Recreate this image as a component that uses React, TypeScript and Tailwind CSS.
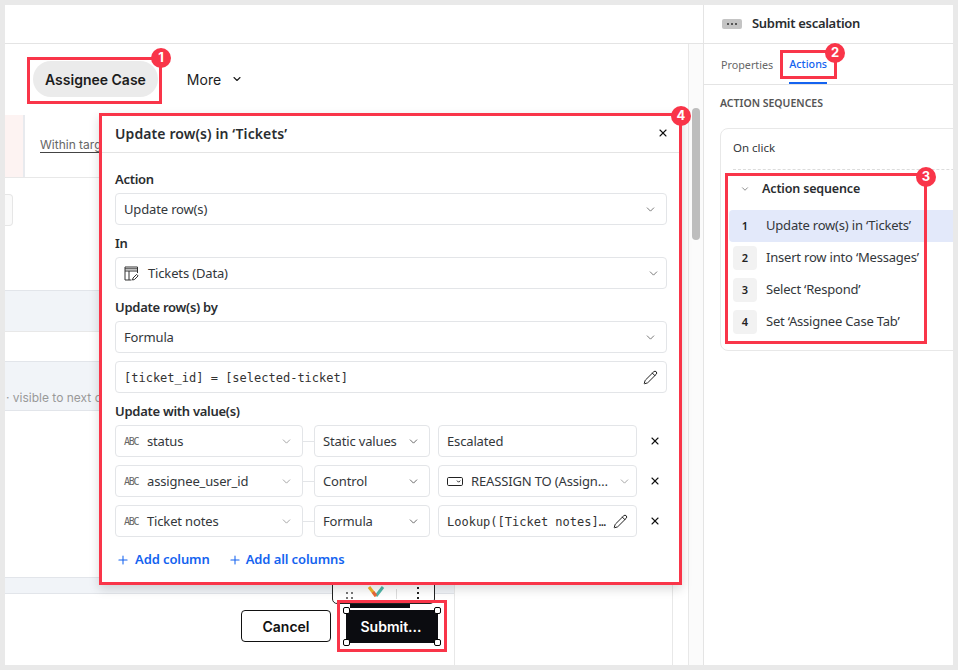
import React from "react";
import { ChevronDown, Plus, X, Pencil } from "lucide-react";

const plex = "[font-family:'Noto_Sans',sans-serif]";
const inter = "[font-family:Inter,sans-serif]";
const mono = "[font-family:'DejaVu_Sans_Mono',monospace]";

function Chev({ className = "text-[#666]" }: { className?: string }) {
  return <ChevronDown size={13} strokeWidth={1.6} className={"shrink-0 " + className} />;
}

function Label({ children }: { children: React.ReactNode }) {
  return <div className="h-[18px] mb-[5px] text-[13px] tracking-[-0.28px] leading-[18px] font-semibold text-[#2a2d30]">{children}</div>;
}

function Field({ children, className = "" }: { children: React.ReactNode; className?: string }) {
  return (
    <div className={"h-8 shrink-0 flex items-center justify-between rounded-[4px] border border-[#e3e5e8] bg-white pl-2 pr-[9px] pt-px text-[13px] tracking-[-0.15px] text-[#33373b] " + className}>
      {children}
    </div>
  );
}

function Abc() {
  return <span className={mono + " text-[10px] tracking-[-1.25px] text-[#666] w-[23px] shrink-0"}>ABC</span>;
}

function TableIcon() {
  return (
    <svg width="15" height="15" viewBox="0 0 15 15" fill="none" stroke="#333" strokeWidth="1" className="shrink-0">
      <path d="M13.5 7V1H1v13h6.5" />
      <path d="M1 2.8h12.5M1 5h12.5M5 5v9" />
      <path d="M8.5 14l.5-2 3.6-3.6 1.5 1.5-3.6 3.6z" />
    </svg>
  );
}

function ControlIcon() {
  return (
    <svg width="16" height="10" viewBox="0 0 16 10" fill="none" stroke="#222" strokeWidth="1" className="shrink-0">
      <rect x="0.5" y="0.5" width="15" height="8" rx="1.2" />
      <path d="M10 3.6l1.6 1.6 1.6-1.6" />
    </svg>
  );
}

function ValueRow({ name, op, value }: { name: string; op: string; value: React.ReactNode }) {
  return (
    <div className="flex items-center h-8">
      <Field className="w-[188px]">
        <div className="flex items-center">
          <Abc />
          <span>{name}</span>
        </div>
        <Chev className="text-[#999]" />
      </Field>
      <div className="w-[11px] h-px shrink-0 bg-[#e3e5e8]" />
      <Field className="w-[116px]">
        <span>{op}</span>
        <Chev className="text-[#555]" />
      </Field>
      <div className="w-2 shrink-0" />
      {value}
      <div className="w-[30px] shrink-0 flex pl-[12px]">
        <X size={12} strokeWidth={2.2} className="text-[#111]" />
      </div>
    </div>
  );
}

function RedBox({ className }: { className: string }) {
  return <div className={"absolute border-[3px] border-[#f93549] z-30 " + className} />;
}

function Badge({ n, className }: { n: number; className: string }) {
  return (
    <div className={inter + " absolute z-40 w-5 h-5 rounded-full bg-[#f93549] text-white text-[13px] font-bold flex items-center justify-center " + className}>
      {n}
    </div>
  );
}

function Handle({ className }: { className: string }) {
  return <div className={"absolute w-[7px] h-[7px] rounded-[2px] bg-white border border-black " + className} />;
}

function SeqItem({ n, text, active }: { n: number; text: string; active?: boolean }) {
  return (
    <div className={"flex items-center h-8 pl-1 rounded-l-[4px] " + (active ? "bg-[#e3e9fa]" : "")}>
      <div className={"w-6 h-6 rounded-[4px] flex items-center justify-center text-[11px] font-semibold text-[#222] " + (active ? "" : "bg-[#f2f2f2]")}>{n}</div>
      <span className="ml-[9px] text-[13px] tracking-[-0.2px] whitespace-nowrap text-[#33373b]">{text}</span>
    </div>
  );
}

export default function App() {
  return (
    <div className={plex + " relative w-[958px] h-[670px] bg-[#e9e9e9] p-[5px] flex overflow-hidden"}>
      {/* Left */}
      <div className="w-[698px] flex flex-col bg-white">
        <div className="h-[39px] shrink-0 border-b border-[#e4e4e4]" />
        <div className="flex-1 flex min-h-0">
          <div className="w-[683px] flex flex-col">
            <div className={inter + " h-[71px] shrink-0 flex items-center pl-[28px] pb-px text-[14px] text-[#1c1c1c]"}>
              <div className="h-9 px-3 flex items-center rounded-full bg-[#ebebeb] font-semibold">Assignee Case</div>
              <div className="ml-[29px] flex items-center gap-[10px]">
                <span>More</span>
                <ChevronDown size={12} strokeWidth={2.2} />
              </div>
            </div>
            <div className="flex-1 flex min-h-0">
              <div className="w-[449px] flex flex-col">
                <div className="h-[63px] shrink-0 flex border-b border-[#e8e8e8]">
                  <div className="w-[20px] bg-[#fdf3f2] border-r-2 border-[#e8eaee]" />
                  <div className={inter + " ml-[15px] pt-[21px] text-[12px] text-[#666]"}>
                    <span className="border-b border-[#444] whitespace-nowrap">Within target</span>
                  </div>
                </div>
                <div className="h-[112px] shrink-0 pt-4">
                  <div className="w-2 h-8 bg-[#fafafa] border border-l-0 border-[#e6e6e6] rounded-r-[4px]" />
                </div>
                <div className="h-[41px] shrink-0 bg-[#f1f4f8] border-t border-[#e2e5ea]" />
                <div className="h-[30px] shrink-0 border-t border-[#e8e8e8]" />
                <div className={inter + " h-[50px] shrink-0 bg-[#f1f4f8] border-t border-b border-[#e2e5ea] pt-[27px] pl-px text-[12px] leading-[18px] text-[#999] whitespace-nowrap overflow-hidden"}>
                  · visible to next case
                </div>
                <div className="flex-1" />
                <div className="h-[17px] shrink-0 bg-[#f1f4f8] border-t border-b border-[#e2e5ea]" />
                <div className={inter + " h-[71px] shrink-0 flex justify-end items-start pr-[16px] pt-[16px] gap-[15px] text-[14px] font-semibold"}>
                  <div className="w-[90px] h-8 flex items-center justify-center border border-[#111] rounded-[4px] text-[#111]">Cancel</div>
                  <div className="relative w-[92px] h-[33px] flex items-center justify-center pr-[2px] bg-[#0b0c10] text-white">
                    Submit...
                    <Handle className="-left-[3px] -top-[3px]" />
                    <Handle className="-right-[3px] -top-[3px]" />
                    <Handle className="-left-[3px] -bottom-[3px]" />
                    <Handle className="-right-[3px] -bottom-[3px]" />
                  </div>
                </div>
              </div>
              <div className="flex-1 border-l border-[#e8e8e8]" />
              <div className="w-4 border-l border-[#e8e8e8]" />
            </div>
          </div>
          <div className="w-[15px] border-l border-[#e8e8e8] bg-[#fbfbfb] pt-[64px] pl-[3px]">
            <div className="w-2 h-[132px] rounded-[4px] bg-[#bdbdbd]" />
          </div>
        </div>
      </div>

      {/* Right panel */}
      <div className="w-[250px] bg-white border-l border-[#e4e4e4] flex flex-col overflow-hidden">
        <div className="h-[39px] shrink-0 border-b border-[#e4e4e4] flex items-center pl-[18px]">
          <div className="w-5 h-[10px] rounded-[2px] bg-[#c4c4c4] flex items-center justify-center gap-[2px]">
            <span className="w-[2px] h-[2px] bg-[#555]" />
            <span className="w-[2px] h-[2px] bg-[#555]" />
            <span className="w-[2px] h-[2px] bg-[#555]" />
          </div>
          <span className="ml-[10px] text-[13px] tracking-[-0.3px] font-semibold text-[#2a2d30]">Submit escalation</span>
        </div>
        <div className="h-[41px] shrink-0 border-b border-[#e4e4e4] flex items-end pl-[17px] text-[10.75px]">
          <div className="h-full flex items-center pt-[2px] text-[#666]">Properties</div>
          <div className="ml-[16px] h-full flex items-center pt-[2px] font-medium text-[#1463f0] border-b-2 border-[#1463f0]">Actions</div>
        </div>
        <div className="pl-4 pt-[10px]">
          <div className="h-[16px] text-[10.5px] leading-[16px] font-semibold text-[#555]">ACTION SEQUENCES</div>
          <div className="mt-[17px] w-[280px] h-[223px] rounded-[8px] border border-[#e8e8e8] pl-2">
            <div className="ml-1 h-[41px] flex items-center pb-[2px] text-[11.5px] text-[#33373b] border-b border-dashed border-[#dcdcdc]">On click</div>
            <div className="h-[40px] flex items-center pl-[11px] pb-[2px]">
              <ChevronDown size={10} strokeWidth={1.8} className="text-[#666]" />
              <span className="ml-[12px] text-[12.5px] tracking-[-0.15px] font-semibold text-[#2a2d30]">Action sequence</span>
            </div>
            <SeqItem n={1} text="Update row(s) in ‘Tickets’" active />
            <SeqItem n={2} text="Insert row into ‘Messages’" />
            <SeqItem n={3} text="Select ‘Respond’" />
            <SeqItem n={4} text="Set ‘Assignee Case Tab’" />
          </div>
        </div>
      </div>

      {/* Widget toolbar behind the modal */}
      <div className="absolute left-[332px] top-[570px] w-[103px] h-[34px] z-10 bg-white border border-[#222] rounded-b-[5px] flex items-end pb-[4px]">
        <div className="ml-[13px] w-[7px] h-[7px] grid grid-cols-2 gap-[3px]">
          <span className="w-[2px] h-[2px] bg-[#777]" />
          <span className="w-[2px] h-[2px] bg-[#777]" />
          <span className="w-[2px] h-[2px] bg-[#777]" />
          <span className="w-[2px] h-[2px] bg-[#777]" />
        </div>
        <svg width="18" height="16" viewBox="0 0 18 16" fill="none" strokeWidth="3" className="ml-[14px]">
          <path d="M2 4l7 9" stroke="#f0b429" />
          <path d="M9 13l7-9" stroke="#4fb6a8" />
          <path d="M6 9l3 4" stroke="#e8663c" />
        </svg>
        <div className="ml-[11px] w-px h-[10px] bg-[#ddd]" />
        <div className="ml-[20px] flex flex-col gap-[3px]">
          <span className="w-[2px] h-[2px] bg-[#222]" />
          <span className="w-[2px] h-[2px] bg-[#222]" />
          <span className="w-[2px] h-[2px] bg-[#222]" />
        </div>
      </div>
      <div className="absolute left-[350px] top-[604px] w-[60px] h-[4px] bg-[#0b0c10] z-10" />

      {/* Update modal */}
      <div className="absolute left-[99px] top-[113px] w-[583px] h-[472px] z-20 bg-white border-[3px] border-[#f93549] shadow-[0_4px_10px_rgba(0,0,0,0.15)] flex flex-col">
        <div className="h-[37px] shrink-0 border-b border-[#e4e4e4] flex items-center justify-between pl-[13px] pr-[10px] pb-[2px]">
          <span className="text-[14px] tracking-[0.1px] font-semibold text-[#2a2d30]">Update row(s) in ‘Tickets’</span>
          <X size={12} strokeWidth={2.2} className="text-[#111]" />
        </div>
        <div className="pl-[13px] pr-3 pt-[17px]">
          <Label>Action</Label>
          <Field className="mb-[9px]">
            <span>Update row(s)</span>
            <Chev />
          </Field>
          <Label>In</Label>
          <Field className="mb-[9px] !pr-[6px]">
            <div className="flex items-center gap-[9px]">
              <TableIcon />
              <span>Tickets (Data)</span>
            </div>
            <Chev />
          </Field>
          <Label>Update row(s) by</Label>
          <Field className="mb-2">
            <span>Formula</span>
            <Chev />
          </Field>
          <Field className="mb-[9px] !pr-[8px]">
            <span className={mono + " text-[12px] tracking-normal text-[#333]"}>[ticket_id] = [selected-ticket]</span>
            <Pencil size={15} strokeWidth={1.5} className="text-[#111]" />
          </Field>
          <Label>Update with value(s)</Label>
          <div className="flex flex-col gap-2">
            <ValueRow
              name="status"
              op="Static values"
              value={
                <Field className="w-[199px]">
                  <span>Escalated</span>
                </Field>
              }
            />
            <ValueRow
              name="assignee_user_id"
              op="Control"
              value={
                <Field className="w-[199px] !pr-[5px]">
                  <div className="flex items-center gap-[8px]">
                    <ControlIcon />
                    <span className="whitespace-nowrap">REASSIGN TO (Assign…</span>
                  </div>
                  <Chev className="text-[#999]" />
                </Field>
              }
            />
            <ValueRow
              name="Ticket notes"
              op="Formula"
              value={
                <Field className="w-[199px] !pr-[8px]">
                  <span className={mono + " text-[12px] tracking-normal text-[#333] whitespace-nowrap"}>Lookup([Ticket notes]…</span>
                  <Pencil size={15} strokeWidth={1.5} className="text-[#111]" />
                </Field>
              }
            />
          </div>
          <div className="mt-[14px] h-[18px] flex items-center pl-[1px] text-[13px] tracking-[-0.1px] font-semibold text-[#1463f0]">
            <Plus size={14} strokeWidth={1.8} />
            <span className="ml-[5px]">Add column</span>
            <Plus size={14} strokeWidth={1.8} className="ml-[18px]" />
            <span className="ml-[4px]">Add all columns</span>
          </div>
        </div>
      </div>

      {/* Callouts */}
      <RedBox className="left-[27px] top-[57px] w-[135px] h-[47px]" />
      <RedBox className="left-[780px] top-[50px] w-[57px] h-[29px]" />
      <RedBox className="left-[725px] top-[173px] w-[202px] h-[171px]" />
      <RedBox className="left-[337px] top-[600px] w-[110px] h-[52px]" />
      <Badge n={1} className="left-[151px] top-[48px]" />
      <Badge n={2} className="left-[825px] top-[43px]" />
      <Badge n={3} className="left-[916px] top-[167px]" />
      <Badge n={4} className="left-[671px] top-[106px]" />
    </div>
  );
}
